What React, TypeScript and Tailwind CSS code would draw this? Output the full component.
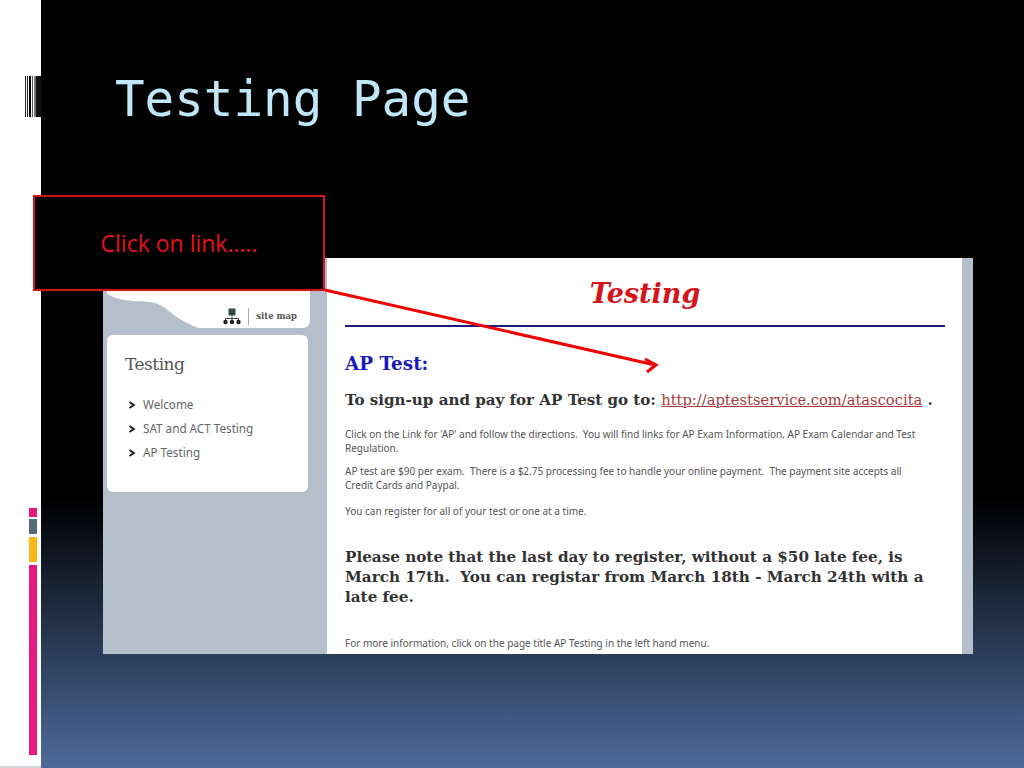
const menuItems = ['Welcome', 'SAT and ACT Testing', 'AP Testing'];

const Barcode = () => (
  <svg width="16" height="41" viewBox="0 0 16 41" className="ml-[25px] mt-[76px] shrink-0">
    <rect x="0" width="1" height="41" fill="#222" />
    <rect x="2" width="1" height="41" fill="#222" />
    <rect x="4" width="2" height="41" fill="#000" />
    <rect x="7" width="1" height="41" fill="#555" />
    <rect x="9" width="2" height="41" fill="#777" />
    <rect x="11" width="5" height="41" fill="#111" />
  </svg>
);

const LeftStrip = () => (
  <div className="w-[41px] shrink-0 h-full bg-white flex flex-col border-b-2 border-gray-300">
    <Barcode />
    <div className="ml-[29px] w-[8px] mt-[391px] flex flex-col">
      <div className="h-[9px] bg-[#e5197f]" />
      <div className="h-[15px] mt-[2px] bg-[#56677e]" />
      <div className="h-[25px] mt-[3px] bg-[#fdb515]" />
      <div className="h-[190px] mt-[3px] bg-[#e5197f]" />
    </div>
  </div>
);

const Sidebar = () => (
  <div className="w-[224px] shrink-0 bg-[#b5bfcb] flex flex-col font-['Noto_Sans',sans-serif]">
    <div className="relative h-[70px] ml-[4px] w-[203px]">
      <svg width="203" height="70" viewBox="0 0 203 70" className="absolute inset-0">
        <path d="M0 0H203V62Q203 70 195 70H92C80 66 70 60 58 50C48 42 36 44 26 43C14 42 8 40 0 36Z" fill="#fff" />
      </svg>
      <div className="absolute right-[13px] top-[50px] flex items-center">
        <svg width="18" height="17" viewBox="0 0 18 17">
          <rect x="5.500" y="0.500" width="7" height="7" fill="#3b4a3f" />
          <path d="M9 7V10M2.500 13V10.500H15.500V13M9 10V13" stroke="#444" strokeWidth="1" fill="none" />
          <circle cx="2.500" cy="14" r="2.200" fill="#222" />
          <circle cx="9" cy="14" r="2.200" fill="#222" />
          <circle cx="15.500" cy="14" r="2.200" fill="#222" />
        </svg>
        <div className="w-px h-[17px] bg-[#aaa] ml-[7px] mr-[7px]" />
        <span className="text-[8.5px] font-bold text-[#555] font-['DejaVu_Serif',serif]">site map</span>
      </div>
    </div>
    <div className="mt-[7px] ml-[4px] w-[201px] h-[157px] bg-white rounded-md pl-[18px] pt-[17px]">
      <h2 className="text-[17px] leading-6 text-[#555] font-['DejaVu_Serif',serif] tracking-[-0.5px]">Testing</h2>
      <ul className="mt-[20px] flex flex-col gap-[7px]">
        {menuItems.map((item) => (
          <li key={item} className="flex items-center h-[17px] text-[11.7px] text-[#666]">
            <svg width="8" height="8" viewBox="0 0 8 8" className="ml-[3px] mr-[7px]">
              <path d="M1.500 1L5.800 4L1.500 7" stroke="#222" strokeWidth="2" fill="none" />
            </svg>
            {item}
          </li>
        ))}
      </ul>
    </div>
  </div>
);

const Content = () => (
  <div className="w-[635px] shrink-0 bg-white pl-[18px] pr-[17px] text-[#555] font-['Noto_Sans',sans-serif] text-[10px] leading-[14px] overflow-hidden">
    <h1 className="text-center text-[27px] leading-[36px] mt-[18px] font-bold italic text-[#d5141c] font-['DejaVu_Serif',serif]">Testing</h1>
    <div className="h-[2px] bg-[#1d1d7d] mt-[13px]" />
    <h2 className="mt-[25px] text-[18.400px] leading-6 font-bold text-[#1a1ab8] font-['DejaVu_Serif',serif]">AP Test:</h2>
    <p className="mt-[12px] text-[15.100px] leading-6 font-bold text-[#333] font-['DejaVu_Serif',serif] whitespace-nowrap">
      To sign-up and pay for AP Test go to: <a className="font-normal text-[14.700px] text-[#a83a3a] underline">http://aptestservice.com/atascocita</a> .
    </p>
    <p className="mt-[15px]">
      Click on the Link for 'AP' and follow the directions.&nbsp; You will find links for AP Exam Information, AP Exam Calendar and Test
      <br />
      Regulation.
    </p>
    <p className="mt-[9px]">
      AP test are $90 per exam.&nbsp; There is a $2.75 processing fee to handle your online payment.&nbsp; The payment site accepts all
      <br />
      Credit Cards and Paypal.
    </p>
    <p className="mt-[12px]">You can register for all of your test or one at a time.</p>
    <p className="mt-[29px] text-[15.200px] leading-[20px] font-bold text-[#333] font-['DejaVu_Serif',serif] whitespace-nowrap">
      Please note that the last day to register, without a $50 late fee, is
      <br />
      March 17th.&nbsp; You can registar from March 18th - March 24th with a
      <br />
      late fee.
    </p>
    <p className="mt-[29px]">For more information, click on the page title AP Testing in the left hand menu.</p>
  </div>
);

export default function App() {
  return (
    <div className="relative w-[1024px] h-[768px] overflow-hidden flex bg-white">
      <LeftStrip />
      <div className="flex-1 h-full bg-[linear-gradient(180deg,#000_0%,#000_65%,#4c6b9b_100%)]">
        <h1 className="ml-[74px] mt-[64px] text-[49.200px] leading-[70px] text-[#bfe7f7] font-['DejaVu_Sans_Mono',monospace]">Testing Page</h1>
        <div className="ml-[62px] mt-[124px] w-[870px] h-[396px] flex">
          <Sidebar />
          <Content />
          <div className="flex-1 bg-[#b5bfcb]" />
        </div>
      </div>

      {/* callout over the screenshot */}
      <div className="absolute left-[33px] top-[195px] w-[292px] h-[96px] bg-black border-2 border-[#d9101c] flex items-center justify-center">
        <span className="text-[23px] text-[#e8101c] font-['Open_Sans',sans-serif]">Click on link…..</span>
      </div>
      <svg width="1024" height="768" viewBox="0 0 1024 768" className="absolute inset-0 pointer-events-none">
        <path d="M325 290L655 365" stroke="#f00000" strokeWidth="3" fill="none" />
        <path d="M645 359L656 365L647 372" stroke="#f00000" strokeWidth="3" fill="none" />
      </svg>
    </div>
  );
}
